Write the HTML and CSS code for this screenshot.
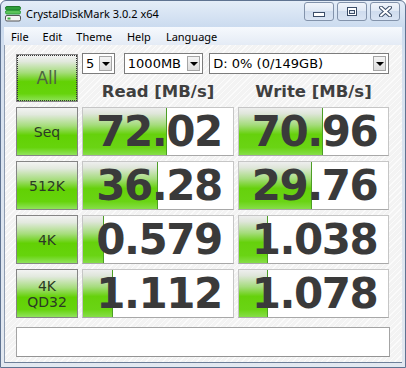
FILE: index.html
```html
<!DOCTYPE html>
<html lang="en">
<head>
    <meta charset="UTF-8">
    <title>CrystalDiskMark 3.0.2 x64</title>
    <link rel="stylesheet" href="styles.css">
</head>
<body>

    <div class="window">
        <div class="titlebar">
            <svg class="app-icon" width="16" height="16" viewBox="0 0 16 16">
                <rect x="0.5" y="0.5" width="15" height="3.5" rx="1.5" fill="#2f9e3a" stroke="#1f7a2a"/>
                <rect x="0.5" y="4.5" width="15" height="3.5" rx="1.5" fill="#5cc45a" stroke="#2f9e3a"/>
                <rect x="0.5" y="9.5" width="15" height="5.5" rx="1.5" fill="#f4f4f4" stroke="#555"/>
                <rect x="2.5" y="11.5" width="3" height="2" fill="#3cb043"/>
            </svg>
            <span class="title">CrystalDiskMark 3.0.2 x64</span>
            <div class="caption-buttons">
                <div class="cap-btn">
                    <svg width="12" height="5"><rect x="0.5" y="0.5" width="11" height="4" fill="#fff" stroke="#3b4d68"/></svg>
                </div>
                <div class="cap-btn">
                    <svg width="10" height="9"><rect x="0.5" y="0.5" width="9" height="8" fill="#fff" stroke="#3b4d68"/><rect x="2.5" y="3.5" width="5" height="3" fill="#dfe7f2" stroke="#3b4d68"/></svg>
                </div>
                <div class="cap-btn">
                    <svg width="13" height="11" viewBox="0 0 13 11">
                        <path d="M2 1.5 L11 9.5 M11 1.5 L2 9.5" stroke="#3b4d68" stroke-width="4" stroke-linecap="round"/>
                        <path d="M2 1.5 L11 9.5 M11 1.5 L2 9.5" stroke="#fff" stroke-width="2" stroke-linecap="round"/>
                    </svg>
                </div>
            </div>
        </div>

        <div class="menubar">
            <span>File</span>
            <span>Edit</span>
            <span>Theme</span>
            <span>Help</span>
            <span>Language</span>
        </div>

        <div class="client">
            <div class="bench">
                <div class="btn-all"><span>All</span></div>
                <div class="top">
                    <div class="combos">
                        <div class="combo combo-count"><span>5</span><i class="drop"></i></div>
                        <div class="combo combo-size"><span>1000MB</span><i class="drop"></i></div>
                        <div class="combo combo-drive"><span>D: 0% (0/149GB)</span><i class="drop"></i></div>
                    </div>
                    <div class="heads">
                        <div>Read [MB/s]</div>
                        <div>Write [MB/s]</div>
                    </div>
                </div>

                <div class="label">Seq</div>
                <div class="cell"><div class="bar" style="width:84px"></div><span>72.02</span></div>
                <div class="cell"><div class="bar" style="width:84px"></div><span>70.96</span></div>

                <div class="label">512K</div>
                <div class="cell"><div class="bar" style="width:75px"></div><span>36.28</span></div>
                <div class="cell"><div class="bar" style="width:73px"></div><span>29.76</span></div>

                <div class="label">4K</div>
                <div class="cell"><div class="bar" style="width:21px"></div><span>0.579</span></div>
                <div class="cell"><div class="bar" style="width:29px"></div><span>1.038</span></div>

                <div class="label">4K<br>QD32</div>
                <div class="cell"><div class="bar" style="width:30px"></div><span>1.112</span></div>
                <div class="cell"><div class="bar" style="width:29px"></div><span>1.078</span></div>
            </div>
            <div class="status"></div>
        </div>
    </div>

</body>
</html>
```

FILE: styles.css
```css
* {
    box-sizing: border-box;
}
body {
    margin: 0;
    font-family: "DejaVu Sans", sans-serif;
    background-color: #fff;
}
.window {
    width: 406px;
    height: 368px;
    border: 1px solid #5f7391;
    border-radius: 6px 6px 0 0;
    background: linear-gradient(#e4edf8, #cbdbef 26px, #d6e1ef 60px, #e2e8f0);
    padding: 0 3px 4px 3px;
    display: flex;
    flex-direction: column;
}
.titlebar {
    height: 26px;
    display: flex;
    align-items: center;
}
.app-icon {
    margin-left: 1px;
    margin-top: -1px;
}
.title {
    font-family: "Noto Sans", sans-serif;
    font-size: 11px;
    color: #000;
    margin-left: 5px;
    margin-top: -1px;
}
.caption-buttons {
    margin-left: auto;
    margin-right: 2px;
    align-self: flex-start;
    margin-top: 1px;
    display: flex;
    gap: 3px;
}
.cap-btn {
    width: 30px;
    height: 19px;
    border: 1px solid #8393ab;
    border-radius: 3px;
    background: linear-gradient(#f1f5fb, #dfe8f4 50%, #cfdcee 50%, #d9e4f3);
    display: flex;
    align-items: center;
    justify-content: center;
}
.cap-btn:first-child svg {
    margin-top: 5px;
}
.menubar {
    height: 18px;
    display: flex;
    align-items: center;
    background: linear-gradient(#f6f9fd, #e4ebf5);
    font-family: "Noto Sans", sans-serif;
    font-size: 11px;
    color: #000;
}
.menubar span {
    padding: 0 7px;
}
.menubar span:nth-child(4), .menubar span:nth-child(5) {
    margin-left: 1px;
}
.client {
    flex: 1;
    background: repeating-linear-gradient(135deg, #f3f3f3 0 3px, #fbfbfb 3px 4px);
    border-left: 1px solid #8d9bb0;
    border-bottom: 1px solid #6e7f99;
    padding: 8px 0 0 11px;
}
.bench {
    display: grid;
    grid-template-columns: 62px 152px 151px;
    grid-template-rows: repeat(5, 49px);
    column-gap: 4px;
    row-gap: 5px;
}
.btn-all, .label {
    border: 1px solid #858585;
    background: linear-gradient(#f3f3f3 0%, #e2e9de 14%, #a6dd7c 38%, #62d104 58%, #66d40c 84%, #90e35c 100%);
    display: flex;
    align-items: center;
    justify-content: center;
    text-align: center;
    color: #2b3a24;
    font-size: 14px;
    line-height: 16px;
}
.btn-all {
    margin-top: 1px;
    outline: 1px dotted #333;
    outline-offset: -2px;
    font-size: 17px;
    color: #4e6441;
}
.top {
    grid-column: 2 / 4;
}
.combos {
    display: flex;
    height: 21px;
}
.combo {
    height: 21px;
    border: 1px solid #7c7c7c;
    background-color: #fff;
    display: flex;
    align-items: center;
    font-size: 13px;
    color: #000;
    padding: 0 2px 0 3px;
}
.combo span {
    flex: 1;
}
.combo-count {
    width: 33px;
}
.combo-size {
    width: 80px;
    margin-left: 9px;
}
.combo-drive {
    width: 181px;
    margin-left: 6px;
}
.drop {
    width: 13px;
    height: 15px;
    border: 1px solid #a5a5a5;
    background: linear-gradient(#f4f4f4, #dcdcdc);
    position: relative;
}
.drop::after {
    content: "";
    position: absolute;
    left: 2px;
    top: 5px;
    border-left: 4px solid transparent;
    border-right: 4px solid transparent;
    border-top: 4px solid #000;
}
.heads {
    display: grid;
    grid-template-columns: 152px 151px;
    column-gap: 4px;
    margin-top: 8px;
    line-height: 20px;
    font-size: 16.5px;
    font-weight: bold;
    color: #3f3f3f;
    text-align: center;
}
.cell {
    position: relative;
    border: 1px solid #c6c6c6;
    border-bottom-color: #a8a8a8;
    background-color: #fff;
    overflow: hidden;
    text-align: center;
    font-size: 42px;
    font-weight: bold;
    line-height: 47px;
    letter-spacing: -1.5px;
    text-indent: 2px;
    color: #3a3a3a;
}
.cell span {
    position: relative;
}
.bar {
    position: absolute;
    left: 0;
    top: 0;
    bottom: 0;
    border-right: 1px solid #4c9e25;
    background: linear-gradient(#eeeeee 0%, #dfe6da 12%, #a5dc7c 36%, #66d10c 56%, #6ad414 84%, #86de48 100%);
}
.status {
    margin-top: 9px;
    width: 374px;
    height: 30px;
    border: 1px solid #a4a4a4;
    border-bottom-color: #949494;
    background-color: #fff;
}
```
